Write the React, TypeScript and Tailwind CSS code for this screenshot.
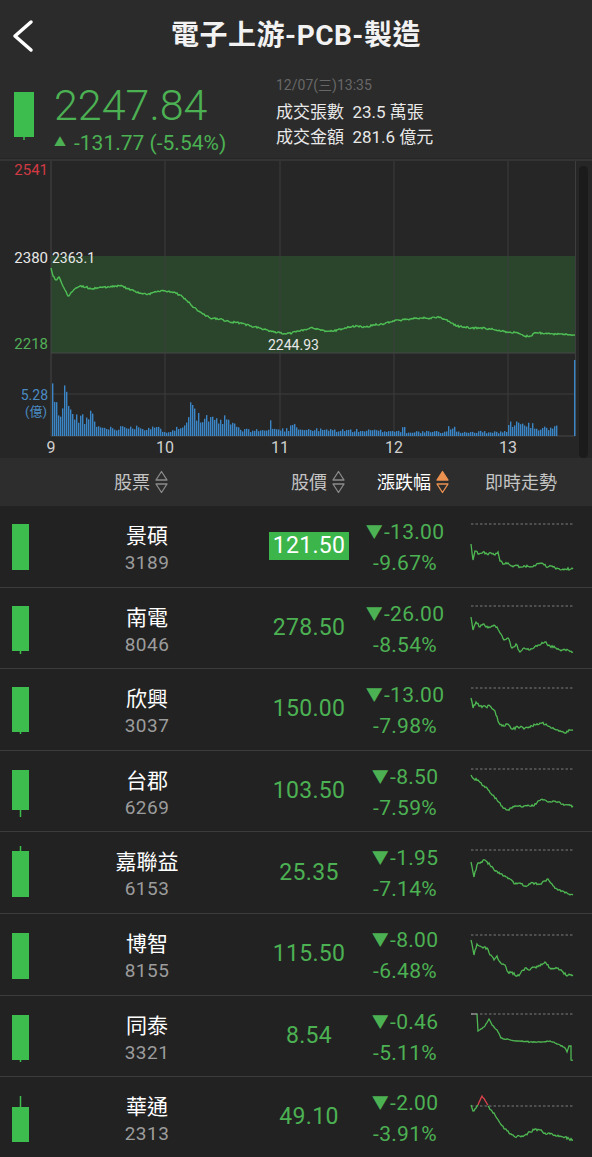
import React from "react";

type Pt = [number, number];

const GREEN = "#4cb153";
const CANDLE = "#3cbd4e";

function rng(seed: number) {
  let s = seed;
  return () => {
    s = (s * 1103515245 + 12345) % 2147483648;
    return s / 2147483648;
  };
}

function jagged(pts: Pt[], jitter: number, seed: number, dx: number, dy: number) {
  const r = rng(seed);
  const out: Pt[] = [];
  for (let i = 0; i < pts.length - 1; i++) {
    const [x0, y0] = pts[i];
    const [x1, y1] = pts[i + 1];
    const steps = Math.max(1, Math.round(x1 - x0));
    for (let s = 0; s < steps; s++) {
      const t = s / steps;
      const j = s === 0 ? 0 : (r() - 0.5) * 2 * jitter;
      out.push([x0 + (x1 - x0) * t, y0 + (y1 - y0) * t + j]);
    }
  }
  out.push(pts[pts.length - 1]);
  return out
    .map((p, i) => `${i ? "L" : "M"}${(p[0] + dx).toFixed(1)},${(p[1] + dy).toFixed(1)}`)
    .join(" ");
}

function interp(pts: Pt[], x: number) {
  if (x <= pts[0][0]) return pts[0][1];
  for (let i = 0; i < pts.length - 1; i++) {
    const [x0, y0] = pts[i];
    const [x1, y1] = pts[i + 1];
    if (x >= x0 && x <= x1) return y0 + ((y1 - y0) * (x - x0)) / (x1 - x0 || 1);
  }
  return pts[pts.length - 1][1];
}

const pricePts: Pt[] = [
  [51, 268], [53, 276], [56, 280], [59, 277], [62, 284], [65, 290], [68, 296], [72, 292], [76, 288], [80, 286],
  [86, 287], [92, 289], [98, 288], [104, 287], [110, 287], [116, 286], [122, 286], [128, 289], [134, 291],
  [140, 293], [148, 294], [156, 292], [164, 291], [172, 292], [180, 295], [186, 300], [192, 306], [200, 312],
  [210, 318], [220, 319], [230, 322], [240, 323], [250, 326], [260, 328], [270, 331], [280, 333], [286, 334],
  [292, 333], [300, 331], [310, 328], [318, 329], [326, 331], [334, 331], [342, 329], [350, 327], [358, 326],
  [366, 327], [374, 325], [382, 324], [390, 322], [396, 320], [402, 320], [410, 319], [420, 318], [430, 318],
  [437, 317], [444, 319], [450, 322], [456, 326], [464, 327], [472, 328], [480, 328], [490, 329], [500, 331],
  [510, 332], [518, 333], [524, 336], [530, 336], [536, 333], [542, 333], [550, 334], [560, 334], [575, 335],
];

const volEnvelope: Pt[] = [
  [52, 60], [54, 46], [56, 35], [58, 29], [60, 26], [62, 31], [64, 53], [66, 49], [68, 51], [70, 31], [72, 23],
  [80, 22], [82, 25], [86, 18], [91, 27], [95, 14], [100, 10], [122, 10], [124, 13], [128, 13], [131, 9],
  [135, 10], [137, 20], [139, 10], [160, 9], [165, 5], [175, 9], [183, 10], [187, 29], [190, 42], [192, 50],
  [194, 31], [196, 27], [200, 19], [207, 21], [215, 17], [225, 20], [232, 15], [238, 10], [240, 7], [268, 7],
  [270, 16], [274, 8], [289, 8], [291, 19], [295, 14], [300, 8], [340, 7], [400, 6], [403, 12], [406, 5],
  [446, 5], [448, 11], [453, 10], [457, 5], [505, 5], [510, 15], [515, 12], [518, 23], [522, 13], [531, 13],
  [537, 9], [556, 10],
];

function volumeBars() {
  const r = rng(11);
  const bars: { x: number; h: number }[] = [];
  for (let x = 52; x <= 556; x += 2) {
    const env = interp(volEnvelope, x);
    const h = Math.max(2, env * (0.55 + 0.5 * r()));
    bars.push({ x, h });
  }
  bars.push({ x: 574, h: 76 });
  return bars;
}

function Chart() {
  const dy = -158;
  const bars = volumeBars();
  const grid = [165, 280, 394, 508];
  const labelFont = "Roboto, 'Noto Sans CJK TC', sans-serif";
  return (
    <div className="h-[300px] bg-[#262626]">
      <svg width="592" height="300" viewBox="0 0 592 300" className="block">
        <line x1="0" y1="2" x2="592" y2="2" stroke="#3a3a3a" strokeWidth="1.5" />
        <rect x="51" y="98" width="524" height="97" fill="#2a452c" />
        {grid.map((g) => (
          <line key={g} x1={g} y1="3" x2={g} y2="278" stroke="#3d3d3d" strokeWidth="1" />
        ))}
        <line x1="51" y1="3" x2="51" y2="278" stroke="#444" strokeWidth="1" />
        <line x1="575.5" y1="3" x2="575.5" y2="278" stroke="#3d3d3d" strokeWidth="1" />
        <line x1="51" y1="195" x2="575" y2="195" stroke="#464646" strokeWidth="1.2" />
        <line x1="51" y1="236" x2="575" y2="236" stroke="#3d3d3d" strokeWidth="1" />
        <line x1="51" y1="278" x2="575" y2="278" stroke="#464646" strokeWidth="1" />
        <rect x="579" y="8" width="9" height="292" rx="4.5" fill="#1b1b1b" />
        <path d={jagged(pricePts, 0.9, 3, 0, dy)} fill="none" stroke="#4fbf55" strokeWidth="1.4" />
        {bars.map((b, i) => (
          <rect key={i} x={b.x} y={278 - b.h} width="1.4" height={b.h} fill="#3a86c6" />
        ))}
        <g fontFamily={labelFont} fontSize="15">
          <text x="48" y="17" textAnchor="end" fill="#d23a44">2541</text>
          <text x="48" y="105" textAnchor="end" fill="#e8e8e8">2380</text>
          <text x="52" y="105" fill="#e8e8e8" fontSize="14">2363.1</text>
          <text x="48" y="191" textAnchor="end" fill="#52b158">2218</text>
          <text x="268" y="192" fill="#e8e8e8" fontSize="14">2244.93</text>
          <text x="48" y="242" textAnchor="end" fill="#4b8cc4" fontSize="14">5.28</text>
          <text x="47" y="258" textAnchor="end" fill="#4b8cc4" fontSize="13">(億)</text>
        </g>
        <g fontFamily={labelFont} fontSize="16" fill="#d0d0d0" textAnchor="middle">
          <text x="51" y="295">9</text>
          <text x="165" y="295">10</text>
          <text x="280" y="295">11</text>
          <text x="394" y="295">12</text>
          <text x="508" y="295">13</text>
        </g>
      </svg>
    </div>
  );
}

function SortIcon({ active }: { active?: boolean }) {
  const c = active ? "#ec9250" : "#8a8a8a";
  return (
    <svg width="13" height="24" viewBox="0 0 13 24" className="ml-[5px]">
      <polygon points="6.5,1.5 12,10 1,10" fill={active ? c : "none"} stroke={c} strokeWidth="1.3" strokeLinejoin="round" />
      <polygon points="1,14 12,14 6.5,22.5" fill="none" stroke={c} strokeWidth="1.3" strokeLinejoin="round" />
    </svg>
  );
}

function TableHeader() {
  return (
    <div className="h-[48px] bg-[#2d2d2d] flex items-center text-[18px] text-[#c4c4c4]">
      <div className="w-[282px] flex items-center justify-center">
        <span>股票</span>
        <SortIcon />
      </div>
      <div className="w-[72px] flex items-center justify-center">
        <span>股價</span>
        <SortIcon />
      </div>
      <div className="w-[118px] flex items-center justify-center text-white">
        <span>漲跌幅</span>
        <SortIcon active />
      </div>
      <div className="w-[98px] flex items-center justify-center">
        <span>即時走勢</span>
      </div>
    </div>
  );
}

type Seg = { color: string; pts: Pt[]; jitter: number };
type RowData = {
  name: string;
  code: string;
  price: string;
  chg: string;
  pct: string;
  hl?: boolean;
  top: number;
  candle: { bt: number; bb: number; wt: number; wb: number };
  dash: number;
  segs: Seg[];
};

const G = "#4fb853";

const rows: RowData[] = [
  {
    name: "景碩", code: "3189", price: "121.50", chg: "-13.00", pct: "-9.67%", hl: true, top: 507,
    candle: { bt: 18, bb: 64, wt: 18, wb: 64 }, dash: 18,
    segs: [{ color: G, jitter: 1.1, pts: [[471, 545], [473, 561], [475, 552], [479, 555], [483, 553], [487, 555], [491, 554], [495, 556], [498, 553], [500, 562], [504, 565], [508, 564], [512, 567], [516, 566], [520, 568], [525, 567], [530, 568], [536, 566], [540, 564], [544, 566], [548, 568], [552, 567], [556, 570], [565, 570], [573, 570]] }],
  },
  {
    name: "南電", code: "8046", price: "278.50", chg: "-26.00", pct: "-8.54%", top: 588,
    candle: { bt: 18, bb: 63, wt: 18, wb: 66 }, dash: 18,
    segs: [{ color: G, jitter: 1.3, pts: [[471, 617], [473, 630], [476, 622], [480, 627], [484, 624], [488, 628], [494, 625], [497, 627], [500, 633], [504, 640], [508, 638], [512, 648], [516, 644], [520, 652], [524, 648], [530, 650], [538, 645], [545, 642], [550, 646], [556, 648], [562, 650], [568, 650], [573, 652]] }],
  },
  {
    name: "欣興", code: "3037", price: "150.00", chg: "-13.00", pct: "-7.98%", top: 670,
    candle: { bt: 18, bb: 63, wt: 18, wb: 65 }, dash: 19,
    segs: [{ color: G, jitter: 1.2, pts: [[471, 699], [473, 709], [476, 703], [480, 707], [486, 708], [490, 707], [495, 712], [498, 722], [502, 727], [507, 725], [512, 730], [518, 728], [525, 729], [532, 727], [540, 724], [546, 725], [552, 729], [558, 731], [565, 734], [570, 731], [573, 731]] }],
  },
  {
    name: "台郡", code: "6269", price: "103.50", chg: "-8.50", pct: "-7.59%", top: 751,
    candle: { bt: 19, bb: 59, wt: 19, wb: 66 }, dash: 18,
    segs: [{ color: G, jitter: 1.1, pts: [[471, 775], [474, 779], [478, 780], [482, 785], [487, 788], [492, 795], [497, 800], [502, 806], [507, 810], [512, 808], [517, 806], [522, 807], [528, 805], [533, 806], [538, 801], [543, 800], [548, 802], [553, 801], [558, 802], [563, 804], [568, 805], [573, 806]] }],
  },
  {
    name: "嘉聯益", code: "6153", price: "25.35", chg: "-1.95", pct: "-7.14%", top: 833,
    candle: { bt: 19, bb: 65, wt: 14, wb: 65 }, dash: 18,
    segs: [{ color: G, jitter: 1.3, pts: [[471, 863], [474, 878], [477, 866], [481, 863], [485, 861], [490, 866], [495, 872], [500, 875], [505, 877], [510, 880], [515, 885], [520, 884], [525, 887], [530, 885], [535, 884], [540, 885], [545, 882], [548, 880], [552, 885], [557, 890], [562, 892], [567, 894], [573, 896]] }],
  },
  {
    name: "博智", code: "8155", price: "115.50", chg: "-8.00", pct: "-6.48%", top: 914,
    candle: { bt: 19, bb: 65, wt: 19, wb: 65 }, dash: 21,
    segs: [{ color: G, jitter: 1.3, pts: [[471, 940], [474, 955], [477, 944], [482, 947], [487, 948], [490, 955], [494, 960], [497, 956], [500, 962], [505, 965], [508, 972], [512, 972], [516, 976], [520, 974], [525, 968], [530, 970], [535, 967], [540, 966], [545, 962], [550, 968], [558, 968], [563, 972], [567, 976], [570, 975], [573, 975]] }],
  },
  {
    name: "同泰", code: "3321", price: "8.54", chg: "-0.46", pct: "-5.11%", top: 996,
    candle: { bt: 19, bb: 64, wt: 19, wb: 66 }, dash: 18,
    segs: [
      { color: "#9a9a9a", jitter: 0, pts: [[471, 1014], [477, 1014]] },
      { color: G, jitter: 0.5, pts: [[477, 1014], [478, 1031], [484, 1027], [489, 1019], [492, 1025], [497, 1030], [501, 1038], [510, 1040], [520, 1041], [530, 1042], [540, 1042], [550, 1041], [555, 1043], [560, 1045], [565, 1048], [567, 1052], [569, 1046], [571, 1046], [571, 1060], [573, 1060]] },
    ],
  },
  {
    name: "華通", code: "2313", price: "49.10", chg: "-2.00", pct: "-3.91%", top: 1078,
    candle: { bt: 30, bb: 65, wt: 19, wb: 65 }, dash: 29,
    segs: [
      { color: G, jitter: 1, pts: [[471, 1106], [473, 1112], [476, 1109], [478, 1106]] },
      { color: "#e0424c", jitter: 0.6, pts: [[478, 1106], [482, 1097], [486, 1103], [488, 1106]] },
      { color: G, jitter: 1.2, pts: [[488, 1107], [492, 1112], [496, 1118], [500, 1124], [505, 1130], [510, 1135], [515, 1138], [520, 1137], [525, 1136], [530, 1133], [535, 1130], [540, 1131], [545, 1134], [550, 1135], [555, 1136], [560, 1137], [565, 1138], [569, 1140], [573, 1141]] },
    ],
  },
];

function Candle({ c }: { c: RowData["candle"] }) {
  return (
    <svg width="40" height="81" viewBox="0 0 40 81" className="block">
      <line x1="20.5" y1={c.wt} x2="20.5" y2={c.wb} stroke={CANDLE} strokeWidth="1.5" />
      <rect x="12" y={c.bt} width="17" height={c.bb - c.bt} fill={CANDLE} />
    </svg>
  );
}

function Row({ r, idx }: { r: RowData; idx: number }) {
  return (
    <div className="h-[81.6px] flex border-b border-[#3c3c3c] bg-[#222222] overflow-hidden">
      <div className="w-[40px] shrink-0">
        <Candle c={r.candle} />
      </div>
      <div className="w-[214px] shrink-0 flex flex-col items-center pt-[16px]">
        <div className="text-[21px] leading-[28px] text-white">{r.name}</div>
        <div className="text-[19px] leading-[26px] text-[#9c9c9c] tracking-[0.5px]">{r.code}</div>
      </div>
      <div className="w-[110px] shrink-0 flex items-center justify-center">
        {r.hl ? (
          <span className="bg-[#3cb54a] text-white text-[23px] leading-[28px] px-[4px] tracking-[0.3px]">{r.price}</span>
        ) : (
          <span className="text-[23px] leading-[28px] tracking-[0.3px] text-[#4cb153]">{r.price}</span>
        )}
      </div>
      <div className="w-[82px] shrink-0 flex flex-col items-center pt-[12px] text-[21px] text-[#4cb153] tracking-[0.3px]">
        <div className="leading-[28px] whitespace-nowrap flex items-center">
          <span className="text-[17px] mr-[1px]">▼</span>
          <span>{r.chg}</span>
        </div>
        <div className="leading-[28px] mt-[3px]">{r.pct}</div>
      </div>
      <div className="flex-1">
        <svg width="146" height="81" viewBox="0 0 146 81" className="block">
          <line x1="25" y1={r.dash} x2="127" y2={r.dash} stroke="#7a7a7a" strokeWidth="1" strokeDasharray="2.5 2" />
          {r.segs.map((s, i) => (
            <path key={i} d={jagged(s.pts, s.jitter, 17 + idx * 13 + i, -446, -r.top)} fill="none" stroke={s.color} strokeWidth="1.3" />
          ))}
        </svg>
      </div>
    </div>
  );
}

export default function App() {
  return (
    <div className="w-[592px] h-[1157px] overflow-hidden bg-[#222222] text-white font-['Roboto','Noto_Sans_CJK_TC',sans-serif]">
      <div className="bg-[#2b2b2b]">
        <div className="h-[72px] grid grid-cols-[48px_1fr_48px] items-center">
          <div className="pl-[10px] flex items-center">
            <svg width="26" height="34" viewBox="0 0 26 34">
              <polyline points="21,3 5,17 21,31" fill="none" stroke="#ffffff" strokeWidth="3.5" strokeLinecap="round" strokeLinejoin="round" />
            </svg>
          </div>
          <div className="text-center text-[28px] font-bold tracking-[0.5px] text-[#f2f2f2] leading-none">電子上游-PCB-製造</div>
          <div />
        </div>
        <div className="h-[86px] flex">
          <div className="ml-[14px] mt-[20px] w-[20px]">
            <svg width="20" height="50" viewBox="0 0 20 50" className="block">
              <line x1="10" y1="44" x2="10" y2="48" stroke={CANDLE} strokeWidth="1.5" />
              <rect x="0" y="0" width="20" height="45" fill={CANDLE} />
            </svg>
          </div>
          <div className="ml-[20px] w-[222px] pt-[10px]">
            <div className="text-[43px] leading-[46px] font-light text-[#4cb153]">2247.84</div>
            <div className="text-[21px] leading-[26px] mt-[2px] flex items-center whitespace-nowrap text-[#4cb153]">
              <span className="text-[12px] mr-[8px]">▲</span>
              <span>-131.77 (-5.54%)</span>
            </div>
          </div>
          <div className="pt-[3px]">
            <div className="text-[14px] leading-[20px] text-[#676767]">12/07(三)13:35</div>
            <div className="text-[17px] leading-[25px] mt-[5px] text-[#e8e8e8] whitespace-nowrap">成交張數&nbsp;&nbsp;23.5 萬張</div>
            <div className="text-[17px] leading-[25px] text-[#e8e8e8] whitespace-nowrap">成交金額&nbsp;&nbsp;281.6 億元</div>
          </div>
        </div>
      </div>
      <Chart />
      <TableHeader />
      {rows.map((r, i) => (
        <Row key={r.code} r={r} idx={i} />
      ))}
    </div>
  );
}
